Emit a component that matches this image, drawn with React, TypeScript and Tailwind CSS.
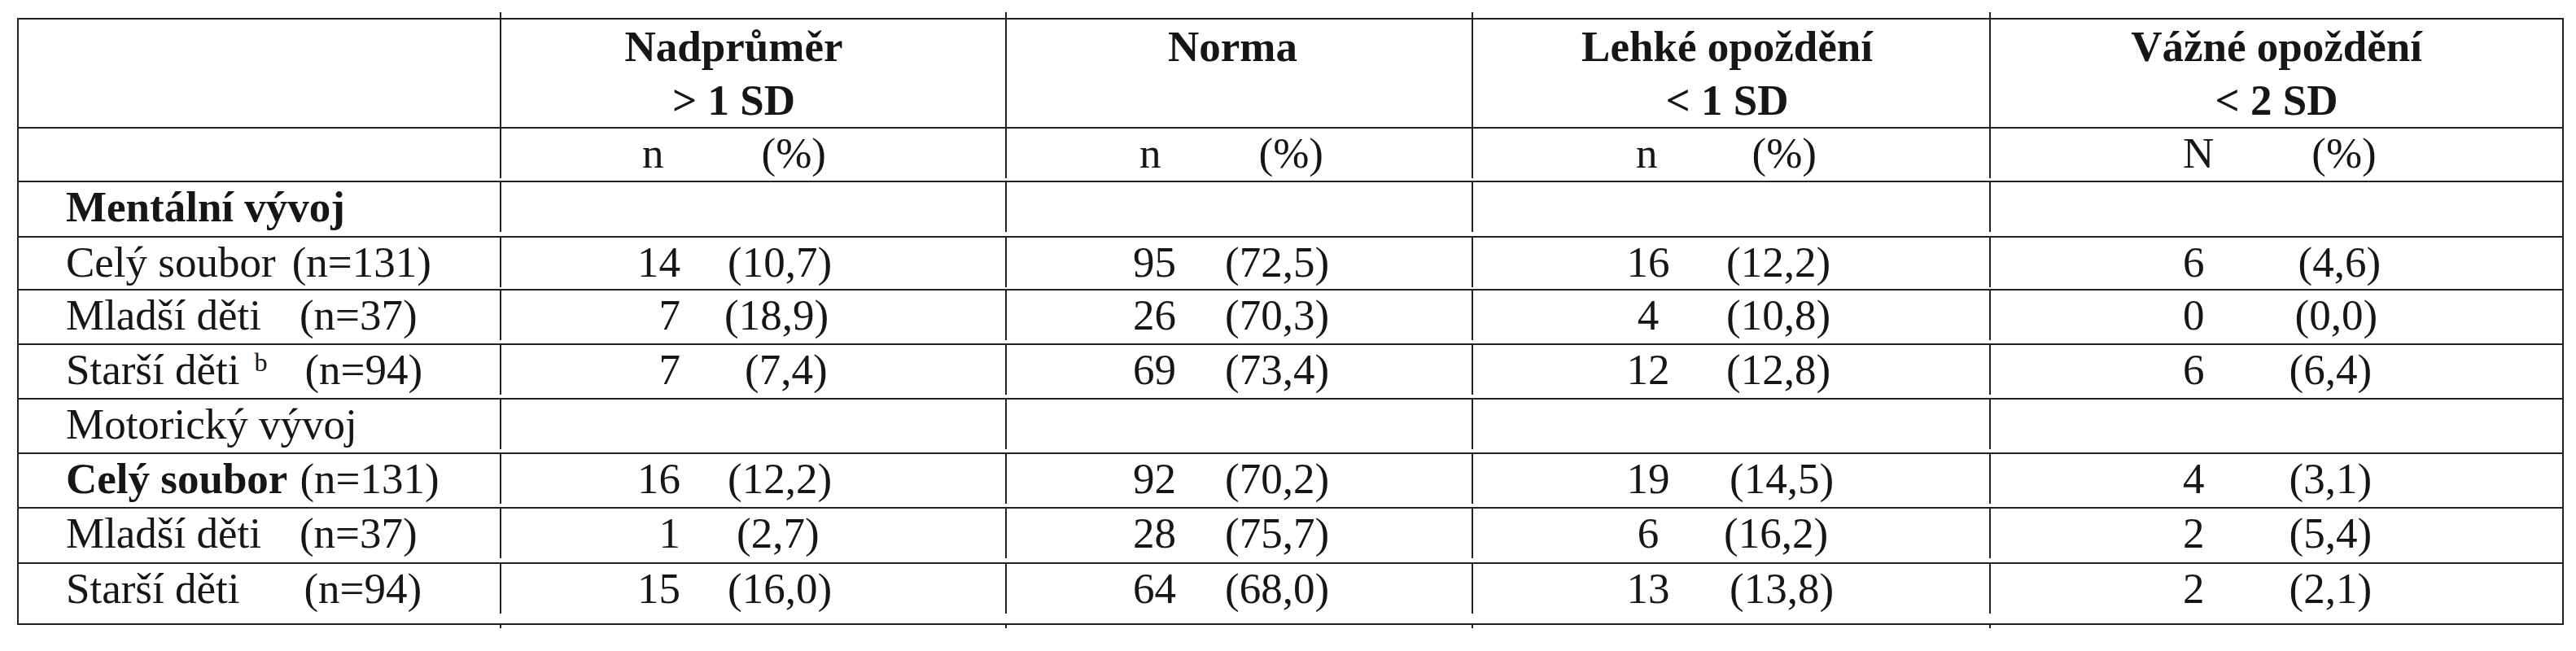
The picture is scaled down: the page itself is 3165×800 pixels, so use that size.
import React from "react";

type Cell = { n: string; p: string; pc: string };
type Row = { label: React.ReactNode; pb: string; c: [Cell, Cell, Cell, Cell] | null };

const rows: Row[] = [
  {
    label: <span className="font-bold">Mentální vývoj</span>,
    pb: "pb-[5px]",
    c: null,
  },
  {
    label: (
      <>
        <span>Celý soubor</span>
        <span className="ml-[20px]">(n=131)</span>
      </>
    ),
    pb: "pb-[2px]",
    c: [
      { n: "14", p: "(10,7)", pc: "ml-[58px]" },
      { n: "95", p: "(72,5)", pc: "ml-[60px]" },
      { n: "16", p: "(12,2)", pc: "ml-[68px]" },
      { n: "6", p: "(4,6)", pc: "ml-[115px]" },
    ],
  },
  {
    label: (
      <>
        <span>Mladší děti</span>
        <span className="ml-[47px]">(n=37)</span>
      </>
    ),
    pb: "pb-[4px]",
    c: [
      { n: "7", p: "(18,9)", pc: "ml-[54px]" },
      { n: "26", p: "(70,3)", pc: "ml-[60px]" },
      { n: "4", p: "(10,8)", pc: "ml-[68px]" },
      { n: "0", p: "(0,0)", pc: "ml-[111px]" },
    ],
  },
  {
    label: (
      <>
        <span>Starší děti</span>
        <span className="ml-[18px] align-[16px] text-[32px] leading-none">b</span>
        <span className="ml-[46px]">(n=94)</span>
      </>
    ),
    pb: "pb-[4px]",
    c: [
      { n: "7", p: "(7,4)", pc: "ml-[79px]" },
      { n: "69", p: "(73,4)", pc: "ml-[60px]" },
      { n: "12", p: "(12,8)", pc: "ml-[68px]" },
      { n: "6", p: "(6,4)", pc: "ml-[104px]" },
    ],
  },
  {
    label: <span>Motorický vývoj</span>,
    pb: "pb-[4px]",
    c: null,
  },
  {
    label: (
      <>
        <span className="font-bold">Celý soubor</span>
        <span className="ml-[15px]">(n=131)</span>
      </>
    ),
    pb: "pb-[4px]",
    c: [
      { n: "16", p: "(12,2)", pc: "ml-[58px]" },
      { n: "92", p: "(70,2)", pc: "ml-[60px]" },
      { n: "19", p: "(14,5)", pc: "ml-[72px]" },
      { n: "4", p: "(3,1)", pc: "ml-[104px]" },
    ],
  },
  {
    label: (
      <>
        <span>Mladší děti</span>
        <span className="ml-[47px]">(n=37)</span>
      </>
    ),
    pb: "pb-[5px]",
    c: [
      { n: "1", p: "(2,7)", pc: "ml-[69px]" },
      { n: "28", p: "(75,7)", pc: "ml-[60px]" },
      { n: "6", p: "(16,2)", pc: "ml-[65px]" },
      { n: "2", p: "(5,4)", pc: "ml-[104px]" },
    ],
  },
  {
    label: (
      <>
        <span>Starší děti</span>
        <span className="ml-[79px]">(n=94)</span>
      </>
    ),
    pb: "pb-[12px]",
    c: [
      { n: "15", p: "(16,0)", pc: "ml-[58px]" },
      { n: "64", p: "(68,0)", pc: "ml-[60px]" },
      { n: "13", p: "(13,8)", pc: "ml-[72px]" },
      { n: "2", p: "(2,1)", pc: "ml-[104px]" },
    ],
  },
];

const nCls = [
  "inline-block w-[220px] text-right",
  "inline-block w-[208px] text-right",
  "inline-block ml-[187px] w-[56px] text-center",
  "inline-block ml-[236px]",
];

function Ticks({ h }: { h: string }) {
  return (
    <div className={`grid grid-cols-[593px_621px_573px_636px_702px] pl-[2px] ${h}`}>
      <div className="border-r-2 border-[#222]" />
      <div className="border-r-2 border-[#222]" />
      <div className="border-r-2 border-[#222]" />
      <div className="border-r-2 border-[#222]" />
      <div />
    </div>
  );
}

export default function App() {
  return (
    <div className="min-h-[800px] w-[3165px] bg-white pt-[15px] pl-[21px] font-['Liberation_Serif','Times_New_Roman',serif] text-[53px] text-[#161616]">
      <Ticks h="h-[7px]" />
      <div className="w-[3129px] border-2 border-[#222]">
        {/* header */}
        <div className="grid grid-cols-[593px_621px_573px_636px_702px] text-center font-bold leading-[66px]">
          <div className="border-r-2 border-[#222]" />
          <div className="border-r-2 border-[#222] pr-[48px]">
            Nadprůměr
            <br />
            &gt; 1 SD
          </div>
          <div className="border-r-2 border-[#222] pr-[16px]">Norma</div>
          <div className="border-r-2 border-[#222] pr-[10px]">
            Lehké opoždění
            <br />
            &lt; 1 SD
          </div>
          <div>
            Vážné opoždění
            <br />
            &lt; 2 SD
          </div>
        </div>
        {/* n (%) row */}
        <div className="grid grid-cols-[593px_621px_573px_636px_702px] border-t-2 border-[#222] pb-[3px] leading-[61px]">
          <div className="border-r-2 border-[#222]" />
          <div className="border-r-2 border-[#222]">
            <span className="ml-[173px]">n</span>
            <span className="ml-[120px]">(%)</span>
          </div>
          <div className="border-r-2 border-[#222]">
            <span className="ml-[163px]">n</span>
            <span className="ml-[120px]">(%)</span>
          </div>
          <div className="border-r-2 border-[#222]">
            <span className="ml-[200px]">n</span>
            <span className="ml-[116px]">(%)</span>
          </div>
          <div>
            <span className="ml-[236px]">N</span>
            <span className="ml-[120px]">(%)</span>
          </div>
        </div>
        {rows.map((r, i) => (
          <div
            key={i}
            className={`grid grid-cols-[593px_621px_573px_636px_702px] border-t-2 border-[#222] leading-[61px] ${r.pb}`}
          >
            <div className="border-r-2 border-[#222] pl-[58px] whitespace-nowrap">{r.label}</div>
            {[0, 1, 2, 3].map((j) => (
              <div key={j} className={j < 3 ? "border-r-2 border-[#222] whitespace-nowrap" : "whitespace-nowrap"}>
                {r.c ? (
                  <>
                    <span className={nCls[j]}>{r.c[j].n}</span>
                    <span className={r.c[j].pc}>{r.c[j].p}</span>
                  </>
                ) : null}
              </div>
            ))}
          </div>
        ))}
      </div>
      <Ticks h="h-[4px]" />
    </div>
  );
}
